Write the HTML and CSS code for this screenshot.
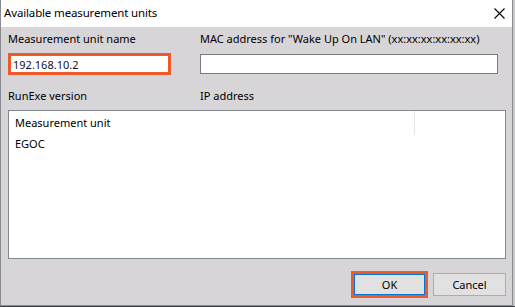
FILE: index.html
```html
<!DOCTYPE html>
<html lang="en">
<head>
    <meta charset="UTF-8">
    <meta name="viewport" content="width=device-width, initial-scale=1.0">
    <title>Available measurement units</title>
    <link rel="stylesheet" href="styles.css">
</head>
<body>
    <div class="window">
        <!-- Title bar -->
        <div class="titlebar">
            <span class="title">Available measurement units</span>
            <svg class="close" width="11" height="11" viewBox="0 0 11 11">
                <path d="M0.5 0.5 L10.5 10.5 M10.5 0.5 L0.5 10.5" stroke="#000" stroke-width="1.1" fill="none"/>
            </svg>
        </div>

        <div class="content">
            <!-- Fields -->
            <div class="fields">
                <label for="unit-name">Measurement unit name</label>
                <label for="mac">MAC address for "Wake Up On LAN" (xx:xx:xx:xx:xx:xx)</label>
                <div class="highlight">
                    <input type="text" id="unit-name" class="field" value="192.168.10.2">
                </div>
                <input type="text" id="mac" class="field plain">
                <div class="sublabel">RunExe version</div>
                <div class="sublabel">IP address</div>
            </div>

            <!-- List of units -->
            <div class="list">
                <div class="list-head">
                    <div class="col-name">Measurement unit</div>
                    <div class="col-rest"></div>
                </div>
                <div class="list-row">EGOC</div>
            </div>

            <!-- Buttons -->
            <div class="buttons">
                <div class="highlight btn-wrap">
                    <button class="btn default">OK</button>
                </div>
                <button class="btn">Cancel</button>
            </div>
        </div>
    </div>
    <div class="desktop"></div>
</body>
</html>
```

FILE: styles.css
```css
html, body {
    margin: 0;
    padding: 0;
    background-color: #c9c9cb;
}

body {
    font-family: "Noto Sans", sans-serif;
    font-size: 11px;
    color: #000;
    width: 515px;
    height: 307px;
    overflow: hidden;
}

.window {
    width: 511px;
    height: 305px;
    border: 1px solid #8b8b8f;
    border-top: none;
    display: flex;
    flex-direction: column;
    background-color: #d7d5d8;
}

.titlebar {
    height: 27px;
    background-color: #fff;
    display: flex;
    align-items: center;
    justify-content: space-between;
    padding: 0 7px 0 3px;
}

.title {
    font-size: 11.5px;
    letter-spacing: -0.15px;
    padding-bottom: 2px;
}

.close {
    margin-top: -1px;
}

.content {
    flex: 1;
    padding: 4px 6px 0 7px;
    display: flex;
    flex-direction: column;
}

.fields {
    display: grid;
    grid-template-columns: 163px 298px;
    column-gap: 29px;
    align-items: center;
}

.fields label {
    display: block;
    line-height: 16px;
    margin-bottom: 6px;
    white-space: nowrap;
}

.highlight {
    border: 3px solid #ef5a2a;
}

.field {
    box-sizing: border-box;
    width: 100%;
    height: 16px;
    border: none;
    padding: 0 0 0 2px;
    margin: 0;
    font-family: "Noto Sans", sans-serif;
    font-size: 11px;
    color: #101030;
    background-color: #fff;
    outline: none;
    display: block;
}

.field.plain {
    height: 20px;
    border: 1px solid #7a7a7a;
}

.sublabel {
    line-height: 16px;
    margin-top: 13px;
}

.list {
    margin-top: 6px;
    height: 149px;
    box-sizing: border-box;
    border: 1px solid #828790;
    background-color: #fff;
}

.list-head {
    display: flex;
    height: 24px;
    align-items: center;
}

.col-name {
    width: 399px;
    padding-left: 6px;
    height: 24px;
    line-height: 24px;
    border-right: 1px solid #e5e5e5;
}

.list-row {
    padding-left: 6px;
    line-height: 18px;
}

.buttons {
    display: flex;
    justify-content: flex-end;
    align-items: center;
    gap: 5px;
    margin-top: 12px;
}

.btn {
    width: 73px;
    height: 23px;
    font-family: "Noto Sans", sans-serif;
    font-size: 11px;
    color: #000;
    background-color: #e1e1e1;
    border: 1px solid #adadad;
    padding: 0;
}

.btn.default {
    width: 71px;
    height: 21px;
    border-color: #0078d7;
}

.btn-wrap {
    display: flex;
}

.desktop {
    height: 2px;
    background-color: #3a3a48;
}
```
